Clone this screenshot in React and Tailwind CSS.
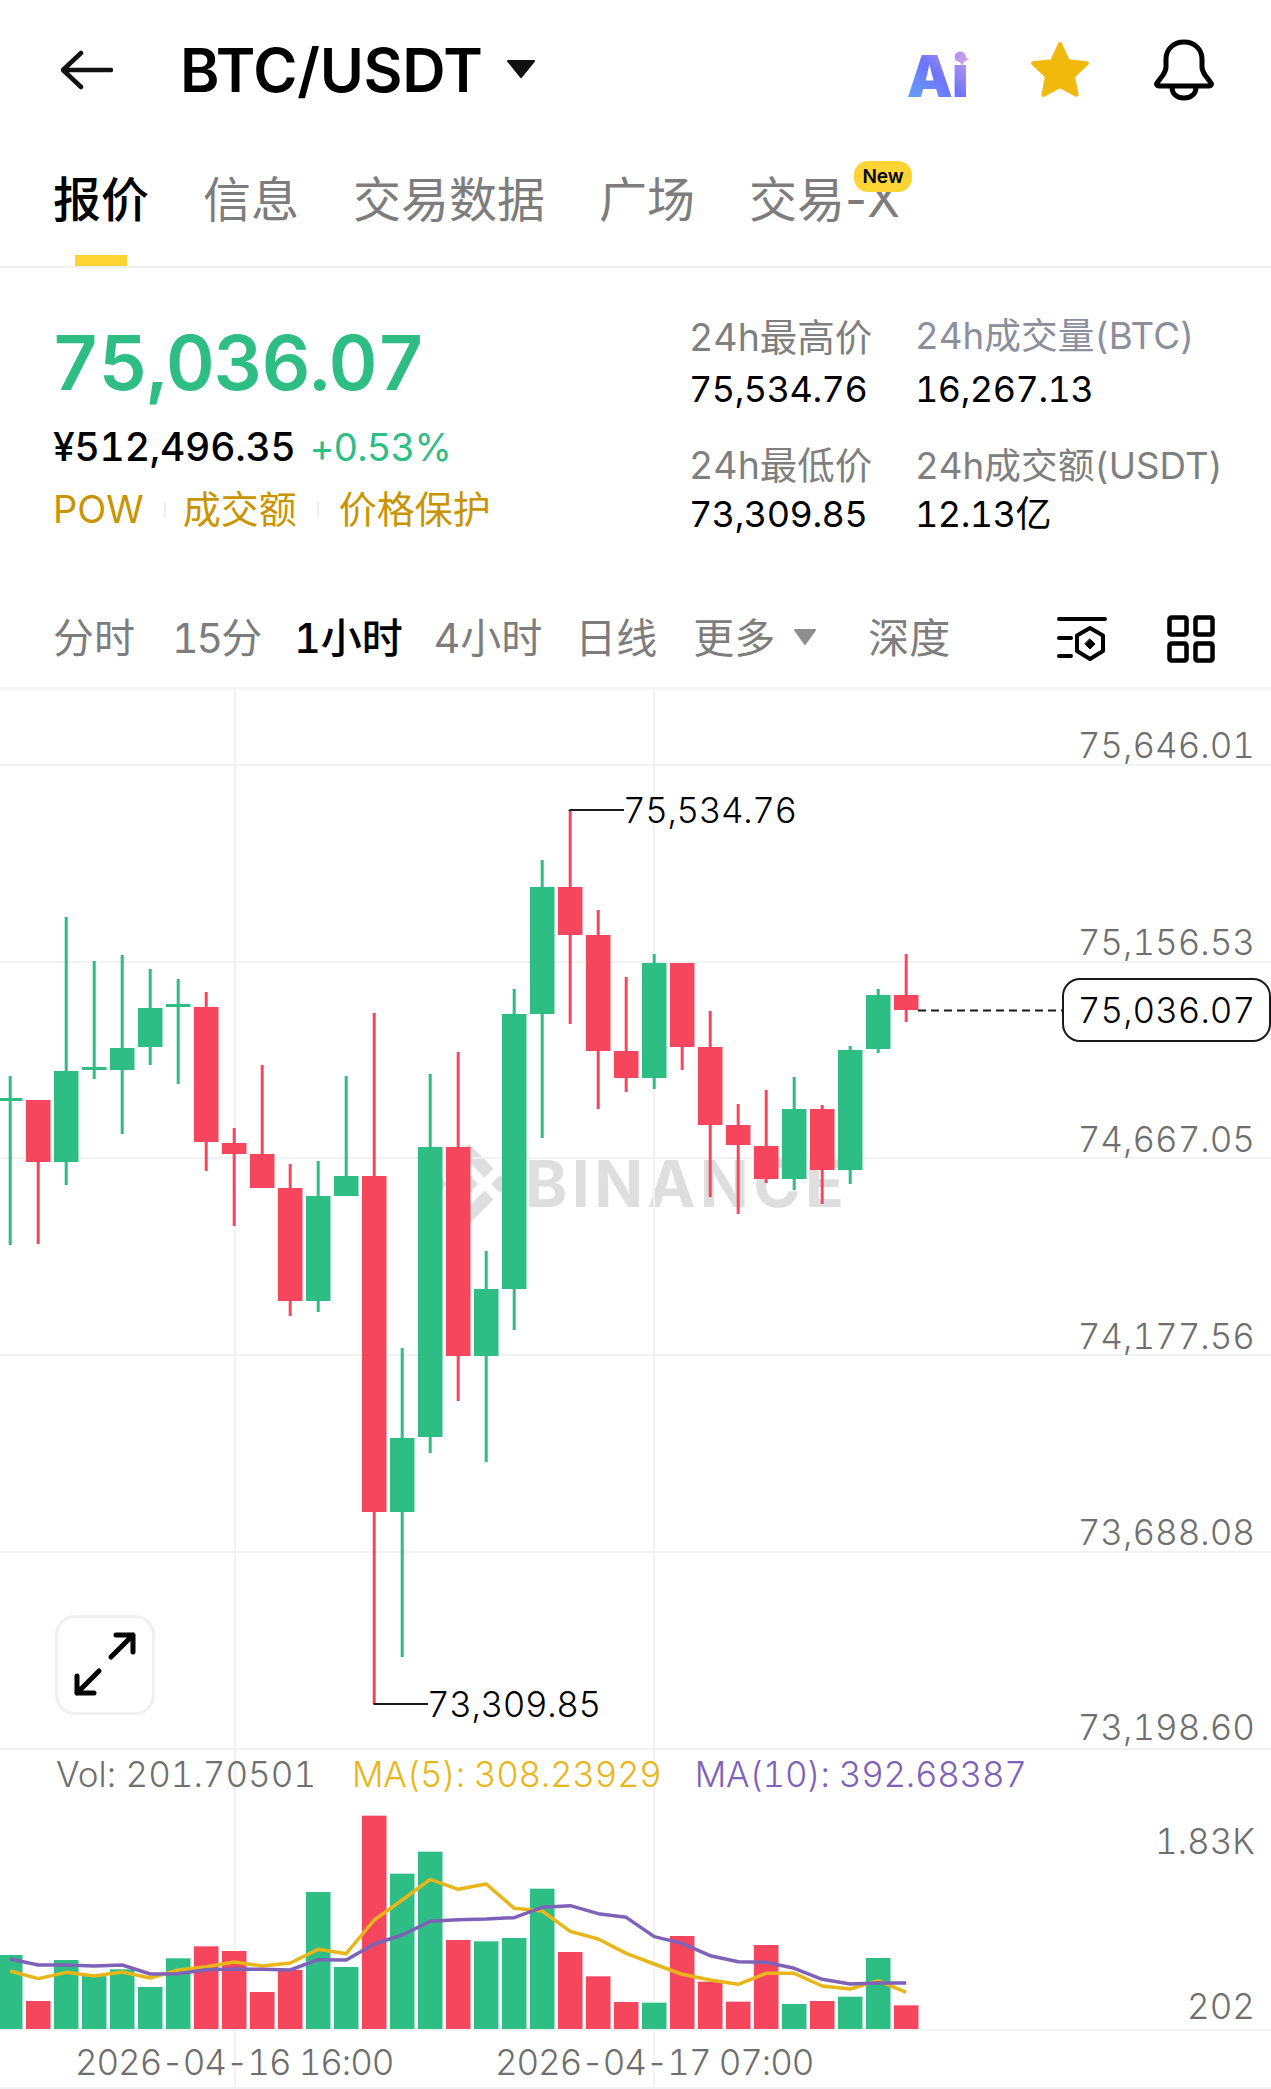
import React from 'react';

const G = '#2ebd85';
const R = '#f6465d';
// [colour, wickTop, wickBottom, bodyTop, bodyBottom]
const candles = [
  [G, 1076, 1245, 1098, 1101],
  [R, 1100, 1244, 1100, 1162],
  [G, 917, 1185, 1071, 1162],
  [G, 961, 1079, 1067, 1070],
  [G, 955, 1134, 1048, 1070],
  [G, 969, 1065, 1008, 1047],
  [G, 979, 1084, 1004, 1007],
  [R, 992, 1171, 1007, 1142],
  [R, 1128, 1226, 1143, 1154],
  [R, 1065, 1188, 1154, 1188],
  [R, 1164, 1316, 1188, 1301],
  [G, 1161, 1312, 1196, 1301],
  [G, 1076, 1196, 1176, 1196],
  [R, 1013, 1704, 1176, 1512],
  [G, 1348, 1657, 1438, 1512],
  [G, 1074, 1453, 1147, 1437],
  [R, 1052, 1401, 1147, 1356],
  [G, 1251, 1462, 1289, 1356],
  [G, 989, 1330, 1014, 1289],
  [G, 860, 1138, 887, 1014],
  [R, 810, 1024, 887, 935],
  [R, 910, 1109, 935, 1051],
  [R, 977, 1092, 1051, 1078],
  [G, 954, 1089, 963, 1078],
  [R, 963, 1070, 963, 1047],
  [R, 1011, 1197, 1047, 1125],
  [R, 1104, 1214, 1125, 1145],
  [R, 1090, 1183, 1146, 1179],
  [G, 1077, 1190, 1109, 1179],
  [R, 1105, 1204, 1109, 1170],
  [G, 1046, 1184, 1050, 1170],
  [G, 989, 1053, 995, 1049],
  [R, 954, 1022, 995, 1010],
];
const volTops = [645, 783, 660, 708, 688, 741, 655, 619, 633, 756, 690, 456, 681, 227, 401, 335, 600, 604, 594, 446, 636, 709, 786, 788, 588, 725, 785, 615, 792, 783, 770, 654, 796];
const ma5 = [693, 716, 697, 708, 696, 714, 690, 680, 666, 678, 669, 628, 641, 540, 480, 418, 448, 432, 505, 513, 574, 597, 640, 672, 703, 720, 733, 700, 700, 738, 747, 722, 757];
const ma10 = [657, 675, 675, 678, 675, 702, 701, 689, 687, 688, 690, 659, 660, 612, 585, 544, 539, 537, 533, 502, 497, 521, 532, 590, 610, 647, 665, 667, 685, 718, 732, 729, 729];
const cx = (i) => 10.2 + 28 * i;
const zy = (z) => 1740 + z / 3;
const pts = (a) => a.map((z, i) => `${cx(i)},${zy(z)}`).join(' ');
const hLines = [765, 962, 1158, 1355, 1552, 1749, 2030, 2088];
const vLines = [235, 654];
const axis = [
  ['75,646.01', 'top-[33px]'],
  ['75,156.53', 'top-[230px]'],
  ['74,667.05', 'top-[427px]'],
  ['74,177.56', 'top-[624px]'],
  ['73,688.08', 'top-[820px]'],
  ['73,198.60', 'top-[1015px]'],
  ['1.83K', 'top-[1129px]'],
  ['202', 'top-[1294px]'],
];

function Chart() {
  return (
    <svg viewBox="0 690 1271 1399" width="1271" height="1399" className="relative block">
      {hLines.map((y) => (
        <rect key={y} x="0" y={y - 1} width="1271" height="2" fill="#f1f2f3" />
      ))}
      {vLines.map((x) => (
        <rect key={x} x={x - 1} y="690" width="2" height="1399" fill="#f1f2f3" />
      ))}
      {candles.map(([c, wt, wb, bt, bb], i) => (
        <g key={i} fill={c}>
          <rect x={cx(i) - 1.5} y={wt} width="3" height={wb - wt} />
          <rect x={cx(i) - 12.3} y={bt} width="24.6" height={bb - bt} />
          <rect x={cx(i) - 12.3} y={zy(volTops[i])} width="24.6" height={2029 - zy(volTops[i])} />
        </g>
      ))}
      <polyline points={pts(ma5)} fill="none" stroke="#e9b61a" strokeWidth="3.5" strokeLinejoin="round" />
      <polyline points={pts(ma10)} fill="none" stroke="#7e62b8" strokeWidth="3.5" strokeLinejoin="round" />
      <path d="M569.5 810V811M569.5 810H624M373.5 1704H428" stroke="#1a1a1a" strokeWidth="2" fill="none" />
      <path d="M918 1010.5H1062" stroke="#1a1a1a" strokeWidth="2" strokeDasharray="8 5" fill="none" />
    </svg>
  );
}

export default function App() {
  return (
    <div className="w-[1271px] h-[2089px] overflow-hidden bg-white text-black tabular-nums font-[Inter,'Noto_Sans_CJK_SC',sans-serif]">
      {/* header */}
      <div className="h-[140px] flex items-center">
        <svg width="52" height="40" viewBox="0 0 52 40" fill="none" stroke="#111" strokeWidth="4.5" strokeLinecap="round" strokeLinejoin="round" className="ml-[61px]">
          <path d="M50 20H3M20 3L2 20L20 37" />
        </svg>
        <div className="ml-[67px] text-[60px] leading-none font-semibold tracking-[-0.3px]">BTC/USDT</div>
        <svg width="30" height="20" viewBox="0 0 30 20" className="ml-[23px] -mt-[2px]">
          <path d="M2 2H28L15 18Z" fill="#111" stroke="#111" strokeWidth="2" strokeLinejoin="round" />
        </svg>
        <div className="relative ml-[371px] mt-[11px] w-[63px] text-[58px] leading-[56px] font-black tracking-[-1px] bg-linear-to-tr from-[#5fa8ff] via-[#6e74f7] to-[#d0a0ec] bg-clip-text text-transparent">
          Ai
        </div>
        <svg width="16" height="16" viewBox="0 0 16 16" className="-ml-[16px] -mt-[24px] translate-y-[1px]">
          <path d="M8 0Q9 7 16 8Q9 9 8 16Q7 9 0 8Q7 7 8 0Z" fill="#c59ae8" />
        </svg>
        <svg width="62" height="60" viewBox="0 0 60 58" className="ml-[59px]">
          <path d="M30 4L37.5 20.5L56 22.5L42.5 35L46 53L30 44.5L14 53L17.5 35L4 22.5L22.5 20.5Z" fill="#f0b90b" stroke="#f0b90b" strokeWidth="4" strokeLinejoin="round" />
        </svg>
        <svg width="60" height="62" viewBox="0 0 60 62" fill="none" stroke="#000" strokeWidth="5" strokeLinecap="round" strokeLinejoin="round" className="ml-[63px]">
          <path d="M5 47H55C57 47 58 45 57 44L51 36C49 33 48 31 48 28V20C48 10 40 3 30 3C20 3 12 10 12 20V28C12 31 11 33 9 36L3 44C2 45 3 47 5 47Z" />
          <path d="M18 48C18 55 23 59 30 59C37 59 42 55 42 48" />
        </svg>
      </div>

      {/* tabs */}
      <div className="relative h-[128px] border-b-2 border-[#f0f0f0] flex items-start pl-[53px] pt-[33px] gap-[54px] text-[48px] leading-[54px] text-[#7d7d7d]">
        <div className="relative text-black font-medium">
          报价
          <div className="absolute left-[22px] top-[82px] w-[52px] h-[11px] bg-[#fcd535]" />
        </div>
        <div>信息</div>
        <div>交易数据</div>
        <div>广场</div>
        <div className="relative normal-nums">
          交易-X
          <div className="absolute left-[105px] -top-[12px] w-[58px] h-[31px] rounded-[14px] bg-[#fcd535] flex items-center justify-center text-[19px] leading-none font-semibold text-black">
            New
          </div>
        </div>
      </div>

      {/* stats */}
      <div className="h-[322px] flex">
        <div className="w-[689px] pl-[53px] pt-[54px]">
          <div className="-ml-[2px] text-[76px] leading-[80px] font-semibold text-[#2ebd85] tracking-[-1.3px]">75,036.07</div>
          <div className="mt-[21px] flex items-center h-[48px]">
            <span className="text-[39px] font-medium tracking-[-0.2px]">¥512,496.35</span>
            <span className="ml-[14px] text-[38px] text-[#2ebd85] tracking-[-0.8px]">+0.53%</span>
          </div>
          <div className="mt-[14px] flex items-center h-[48px] text-[38px] text-[#c99400]">
            <span>POW</span>
            <span className="ml-[20px] w-[2px] h-[15px] bg-[#efefef]" />
            <span className="ml-[17px]">成交额</span>
            <span className="ml-[20px] w-[2px] h-[15px] bg-[#efefef]" />
            <span className="ml-[20px]">价格保护</span>
          </div>
        </div>
        <div className="w-[226px] pt-[48px] text-[37.5px] leading-[44px]">
          <div className="text-[#7f7f7f]">24h最高价</div>
          <div className="mt-[7px] text-[36px] tracking-[-0.5px]">75,534.76</div>
          <div className="mt-[33px] text-[#7f7f7f]">24h最低价</div>
          <div className="mt-[4px] text-[36px] tracking-[-0.5px]">73,309.85</div>
        </div>
        <div className="pt-[46px] text-[36.7px] leading-[44px]">
          <div className="text-[#8b8f9c]">24h成交量(BTC)</div>
          <div className="mt-[9px] text-[36px] tracking-[-0.5px]">16,267.13</div>
          <div className="mt-[33px] text-[#7f7f7f]">24h成交额(USDT)</div>
          <div className="mt-[4px] text-[36px] tracking-[-0.5px]">12.13亿</div>
        </div>
      </div>

      {/* timeframe bar */}
      <div className="h-[100px] border-b-[3px] border-[#f5f5f5] flex items-center pl-[53px] text-[41px] leading-none text-[#7d7d7d]">
        <span>分时</span>
        <span className="ml-[37px] tracking-[-2px]">15分</span>
        <span className="ml-[34px] text-black font-medium">1小时</span>
        <span className="ml-[31px]">4小时</span>
        <span className="ml-[33px]">日线</span>
        <span className="ml-[36px]">更多</span>
        <svg width="24" height="18" viewBox="0 0 24 18" className="ml-[18px] -mt-[3px]">
          <path d="M2 2H22L12 16Z" fill="#8e8e8e" stroke="#8e8e8e" strokeWidth="2" strokeLinejoin="round" />
        </svg>
        <span className="ml-[51px]">深度</span>
        <svg width="50" height="48" viewBox="0 0 50 48" fill="none" stroke="#000" strokeWidth="4" strokeLinecap="round" strokeLinejoin="round" className="ml-[107px]">
          <path d="M2 4H48M2 23H14M2 41H14" />
          <path d="M33 13L46 20.5V36L33 44L20 36V20.5Z" />
          <path d="M33 24L38 29L33 34L28 29Z" fill="#000" strokeWidth="1" />
        </svg>
        <svg width="48" height="48" viewBox="0 0 48 48" fill="none" stroke="#000" strokeWidth="4.5" strokeLinejoin="round" className="ml-[60px]">
          <rect x="2.5" y="2.5" width="17" height="17" rx="2" />
          <rect x="28.5" y="2.5" width="17" height="17" rx="2" />
          <rect x="2.5" y="28.5" width="17" height="17" rx="2" />
          <rect x="28.5" y="28.5" width="17" height="17" rx="2" />
        </svg>
      </div>

      {/* chart */}
      <div className="relative h-[1399px]">
        {/* watermark under the candles */}
        <div className="absolute left-[429px] top-[454px] flex items-center text-[#dedede]">
          <svg width="80" height="80" viewBox="0 0 126.61 126.61" fill="#dedede">
            <path d="M38.73 53.2l24.59-24.58 24.6 24.6 14.3-14.31L63.32 0 24.43 38.9zM0 63.31l14.3-14.31 14.31 14.31-14.31 14.3zM38.73 73.41l24.59 24.59 24.6-24.6 14.31 14.29-38.9 38.91-38.91-38.88zM98 63.31l14.3-14.31 14.31 14.3-14.31 14.32zM77.83 63.3l-14.51-14.52-10.73 10.73-1.24 1.23-2.54 2.54 14.51 14.5 14.51-14.52z" />
          </svg>
          <span className="ml-[16px] text-[64px] leading-none font-bold tracking-[4.5px]">BINANCE</span>
        </div>
        <Chart />
        {axis.map(([t, top]) => (
          <div key={t} className={`absolute right-[16px] ${top} text-[35px] leading-[44px] font-light text-[#6f6f6f]`}>
            {t}
          </div>
        ))}
        <div className="absolute left-[1062px] top-[288px] w-[209px] h-[64px] rounded-[18px] border-2 border-[#1a1a1a] bg-white flex items-center justify-center text-[35px] font-light">
          75,036.07
        </div>
        <div className="absolute left-[623px] top-[98px] text-[35px] leading-[44px] font-light tracking-[-0.4px]">75,534.76</div>
        <div className="absolute left-[427px] top-[992px] text-[35px] leading-[44px] font-light tracking-[-0.4px]">73,309.85</div>
        <div className="absolute left-[55px] top-[925px] w-[100px] h-[100px] rounded-[20px] border-[3px] border-[#f0f0f0] bg-white flex items-center justify-center">
          <svg width="70" height="70" viewBox="0 0 70 70" fill="none" stroke="#000" strokeWidth="5" strokeLinecap="round" strokeLinejoin="round">
            <path d="M41 27L63 5M46 5H63V22M29 41L7 63M7 46V63H24" />
          </svg>
        </div>
        <div className="absolute left-[56px] top-[1062px] flex text-[35px] leading-[44px] font-light">
          <span className="text-[#6f6f6f]">Vol: 201.70501</span>
          <span className="ml-[36px] text-[#e9b61a] tracking-[-0.3px]">MA(5): 308.23929</span>
          <span className="ml-[33px] text-[#7e62b8] tracking-[-0.3px]">MA(10): 392.68387</span>
        </div>
        <div className="absolute left-[75px] top-[1350px] text-[35px] leading-[44px] font-light text-[#6f6f6f] tracking-[-1.1px]">2026-04-16 16:00</div>
        <div className="absolute left-[495px] top-[1350px] text-[35px] leading-[44px] font-light text-[#6f6f6f] tracking-[-1.1px]">2026-04-17 07:00</div>
      </div>
    </div>
  );
}
